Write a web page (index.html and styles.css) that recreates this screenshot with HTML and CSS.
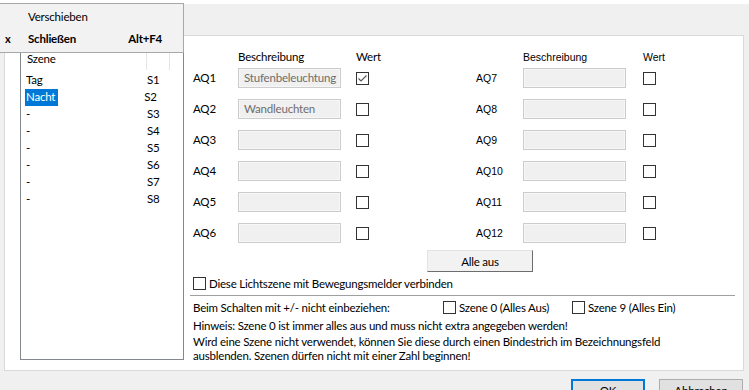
FILE: index.html
```html
<!DOCTYPE html>
<html lang="de">
<head>
    <meta charset="UTF-8">
    <title>Lichtszenen</title>
    <link rel="stylesheet" href="styles.css">
</head>
<body>
<div class="window">
    <div class="topstrip"></div>

    <!-- Tab page -->
    <div class="tabpage">

        <!-- Scene list -->
        <div class="scenelist">
            <div class="list-header">
                <span class="col-name">Szene</span>
                <span class="col-id"></span>
                <span class="col-rest"></span>
            </div>
            <ul class="scene-rows">
                <li><span class="name">Tag</span><span class="id">S1</span></li>
                <li><span class="name selected">Nacht</span><span class="id">S2</span></li>
                <li><span class="name">-</span><span class="id">S3</span></li>
                <li><span class="name">-</span><span class="id">S4</span></li>
                <li><span class="name">-</span><span class="id">S5</span></li>
                <li><span class="name">-</span><span class="id">S6</span></li>
                <li><span class="name">-</span><span class="id">S7</span></li>
                <li><span class="name">-</span><span class="id">S8</span></li>
            </ul>
        </div>

        <!-- Editor -->
        <div class="editor">
            <div class="aq-table">
                <div class="aq-block left">
                    <span></span><span class="head">Beschreibung</span><span></span><span class="head">Wert</span>

                    <span class="label">AQ1</span><input class="desc" type="text" disabled value="Stufenbeleuchtung"><span></span>
                    <span class="box checked"><svg width="11" height="11" viewBox="0 0 11 11"><polyline points="1.5,5.5 4,8 9.5,2.5" fill="none" stroke="#5a5a5a" stroke-width="1.2"/></svg></span>

                    <span class="label">AQ2</span><input class="desc" type="text" disabled value="Wandleuchten"><span></span><span class="box"></span>
                    <span class="label">AQ3</span><input class="desc" type="text" disabled value=""><span></span><span class="box"></span>
                    <span class="label">AQ4</span><input class="desc" type="text" disabled value=""><span></span><span class="box"></span>
                    <span class="label">AQ5</span><input class="desc" type="text" disabled value=""><span></span><span class="box"></span>
                    <span class="label">AQ6</span><input class="desc" type="text" disabled value=""><span></span><span class="box"></span>
                </div>

                <div class="aq-block right">
                    <span></span><span class="head">Beschreibung</span><span></span><span class="head">Wert</span>

                    <span class="label">AQ7</span><input class="desc" type="text" disabled value=""><span></span><span class="box"></span>
                    <span class="label">AQ8</span><input class="desc" type="text" disabled value=""><span></span><span class="box"></span>
                    <span class="label">AQ9</span><input class="desc" type="text" disabled value=""><span></span><span class="box"></span>
                    <span class="label">AQ10</span><input class="desc" type="text" disabled value=""><span></span><span class="box"></span>
                    <span class="label">AQ11</span><input class="desc" type="text" disabled value=""><span></span><span class="box"></span>
                    <span class="label">AQ12</span><input class="desc" type="text" disabled value=""><span></span><span class="box"></span>
                </div>
            </div>

            <button class="btn-alle">Alle aus</button>

            <div class="check-line">
                <span class="box"></span>
                <span>Diese Lichtszene mit Bewegungsmelder verbinden</span>
            </div>

            <div class="separator"></div>

            <div class="exclude-row">
                <span class="exclude-label">Beim Schalten mit +/- nicht einbeziehen:</span>
                <span class="check-item first"><span class="box"></span>Szene 0 (Alles Aus)</span>
                <span class="check-item"><span class="box"></span>Szene 9 (Alles Ein)</span>
            </div>

            <p class="hint">Hinweis: Szene 0 ist immer alles aus und muss nicht extra angegeben werden!</p>
            <p class="hint multi">Wird eine Szene nicht verwendet, können Sie diese durch einen Bindestrich im Bezeichnungsfeld<br>ausblenden. Szenen dürfen nicht mit einer Zahl beginnen!</p>
        </div>
    </div>

    <!-- Dialog buttons -->
    <div class="dialog-buttons">
        <button class="btn ok">OK</button>
        <button class="btn cancel">Abbrechen</button>
    </div>

    <!-- System menu (open) -->
    <div class="sysmenu">
        <div class="menu-item"><span class="icon"></span><span>Verschieben</span><span></span></div>
        <div class="menu-item bold"><span class="icon">x</span><span>Schließen</span><span class="shortcut">Alt+F4</span></div>
    </div>
</div>
</body>
</html>
```

FILE: styles.css
```css
body {
    margin: 0;
    background-color: #f0f0f0;
    font-family: Lato, 'Noto Sans', sans-serif;
    font-size: 11.5px;
    letter-spacing: -0.2px;
    color: #000;
    overflow: hidden;
}

.window {
    position: relative;
    width: 749px;
    height: 390px;
    overflow: hidden;
}

.topstrip {
    height: 4px;
    background-color: #ffffff;
}

/* Tab page */
.tabpage {
    display: flex;
    margin: 31px 5px 0 4px;
    height: 336px;
    box-sizing: border-box;
    padding: 8px 8px 0 15px;
    background-color: #ffffff;
    border: 1px solid #d9d9d9;
}

/* Scene list */
.scenelist {
    width: 164px;
    height: 316px;
    box-sizing: border-box;
    border: 1px solid #828790;
    background-color: #ffffff;
    flex-shrink: 0;
}

.list-header {
    display: flex;
    height: 25px;
}

.list-header span {
    line-height: 28px;
    border-right: 1px solid #e5e5e5;
}

.list-header .col-name {
    width: 119px;
    padding-left: 6px;
}

.list-header .col-id {
    width: 22px;
}

.list-header .col-rest {
    flex: 1;
    border-right: none;
}

.scene-rows {
    list-style: none;
    margin: 2px 0 0 0;
    padding: 0;
}

.scene-rows li {
    display: flex;
    height: 17px;
    line-height: 16px;
}

.scene-rows .name {
    width: 114px;
    padding-left: 5px;
    margin-right: 1px;
}

.scene-rows .name.selected {
    width: auto;
    margin-left: 4px;
    padding: 0 3px 0 1px;
    margin-right: 80px;
    background-color: #0078d7;
    color: #ffffff;
}

.scene-rows .id {
    padding-left: 6px;
}

/* Editor */
.editor {
    width: 545px;
    margin: 5px 0 0 6px;
}

.aq-table {
    display: flex;
    gap: 107px;
    padding-left: 3px;
}

.aq-block {
    display: grid;
    grid-template-columns: 45px 103px 15px 13px;
    grid-template-rows: 19px repeat(5, 31px) 20px;
    align-items: start;
}

.aq-block .head {
    line-height: 16px;
    white-space: nowrap;
}

.aq-block .label {
    line-height: 20px;
}

.aq-block .box {
    margin-top: 4px;
}

.aq-block.right {
    grid-template-columns: 47px 103px 17px 13px;
    font-family: 'Liberation Sans', Arial, sans-serif;
    font-size: 10.5px;
    letter-spacing: 0;
}

.desc {
    width: 103px;
    height: 20px;
    box-sizing: border-box;
    margin: 0;
    padding: 0 0 1px 5px;
    border: 1px solid #cccccc;
    box-shadow: inset 0 0 0 1px #f7f7f7;
    background-color: #f0f0f0;
    color: #6d6d6d;
    font-family: Lato, 'Noto Sans', sans-serif;
    font-size: 11.5px;
    letter-spacing: -0.2px;
}

.box {
    display: inline-flex;
    align-items: center;
    justify-content: center;
    width: 13px;
    height: 13px;
    box-sizing: border-box;
    border: 1px solid #333333;
    background-color: #ffffff;
}

.btn-alle {
    display: block;
    width: 106px;
    height: 22px;
    margin: 7px 0 0 237px;
    padding: 0;
    background-color: #f2f2f2;
    border: 1px solid #6d6d6d;
    border-top-color: #e3e3e3;
    border-left-color: #e3e3e3;
    font-family: Lato, 'Noto Sans', sans-serif;
    font-size: 11.5px;
    letter-spacing: -0.2px;
    color: #000;
}

.check-line {
    display: flex;
    align-items: center;
    gap: 3px;
    height: 16px;
    margin-top: 3px;
    padding-left: 3px;
}

.separator {
    height: 1px;
    margin-top: 4px;
    background-color: #a0a0a0;
}

.exclude-row {
    display: flex;
    align-items: center;
    height: 16px;
    margin-top: 3px;
    padding-left: 3px;
}

.exclude-label {
    width: 250px;
}

.check-item {
    display: flex;
    align-items: center;
    gap: 3px;
}

.check-item.first {
    width: 129px;
}

.hint {
    margin: 3px 0 0 0;
    padding-left: 3px;
    line-height: 16px;
    white-space: nowrap;
}

.hint.multi {
    margin-top: 1px;
    line-height: 14px;
}

/* Dialog buttons */
.dialog-buttons {
    display: flex;
    justify-content: flex-end;
    gap: 14px;
    margin-top: 8px;
    padding-right: 6px;
}

.btn {
    height: 23px;
    padding: 0;
    background-color: #e1e1e1;
    border: 1px solid #adadad;
    font-family: Lato, 'Noto Sans', sans-serif;
    font-size: 11.5px;
    letter-spacing: -0.2px;
    color: #000;
}

.btn.ok {
    width: 74px;
    border: 2px solid #0078d7;
}

.btn.cancel {
    width: 84px;
}

/* System menu */
.sysmenu {
    position: absolute;
    top: 3px;
    left: 0;
    width: 184px;
    height: 50px;
    box-sizing: border-box;
    padding-top: 2px;
    background-color: #f2f2f2;
    border: 1px solid #a8a8a8;
    border-left: none;
}

.menu-item {
    display: grid;
    grid-template-columns: 28px 1fr auto;
    height: 22px;
    line-height: 22px;
    padding-right: 21px;
}

.menu-item.bold {
    font-weight: bold;
}

.menu-item .icon {
    padding-left: 5px;
    font-size: 11px;
}
```
